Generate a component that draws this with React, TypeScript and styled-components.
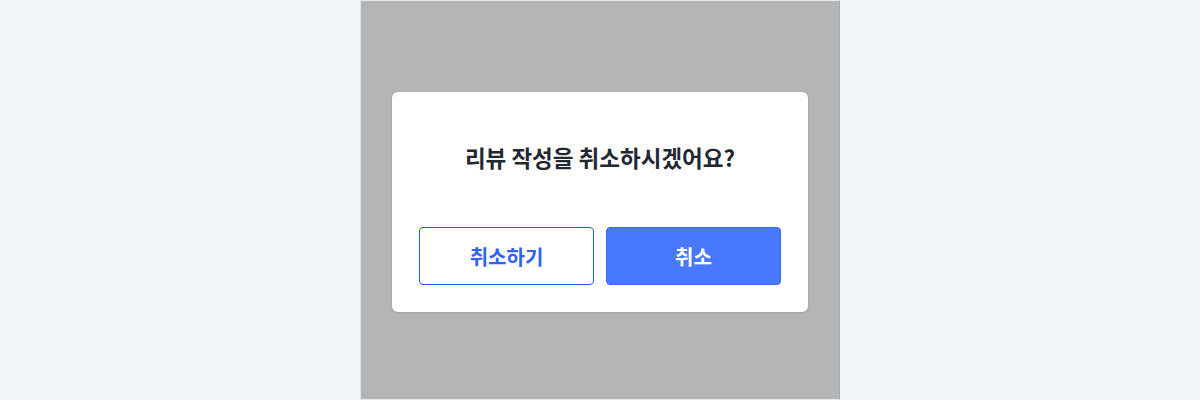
import React from "react";
import styled, { createGlobalStyle } from "styled-components";

const Global = createGlobalStyle`
  html, body { margin: 0; padding: 0; }
  body {
    background: #f2f5f7;
    font-family: "Noto Sans CJK KR", "Noto Sans", sans-serif;
  }
`;

const Page = styled.div`
  width: 1200px;
  height: 400px;
  display: flex;
  justify-content: center;
`;

const Column = styled.div`
  width: 480px;
  height: 400px;
  box-sizing: border-box;
  background: #b4b5b6;
  border-left: 1px solid #dfe2e4;
  border-right: 1px solid #a9abac;
  border-top: 1px solid #e6e9eb;
  border-bottom: 1px solid #e6e9eb;
  padding-top: 91px;
  display: flex;
  justify-content: center;
  align-items: flex-start;
`;

const Modal = styled.div`
  width: 416px;
  height: 220px;
  box-sizing: border-box;
  background: #ffffff;
  border-radius: 6px;
  box-shadow: 0 1px 3px rgba(0, 0, 0, 0.12);
  padding: 0 27px 27px;
  display: flex;
  flex-direction: column;
`;

const Title = styled.h2`
  margin: 0;
  flex: 1;
  display: flex;
  align-items: center;
  justify-content: center;
  padding-bottom: 6px;
  font-size: 22.5px;
  font-weight: 700;
  color: #222831;
  letter-spacing: 0;
`;

const Buttons = styled.div`
  display: grid;
  grid-template-columns: 1fr 1fr;
  gap: 12px;
`;

const Button = styled.button<{ $primary?: boolean }>`
  height: 58px;
  box-sizing: border-box;
  border-radius: 4px;
  border: 1px solid ${(p) => (p.$primary ? "#3b68f5" : "#2d5cf6")};
  background: ${(p) => (p.$primary ? "#4878fd" : "#ffffff")};
  color: ${(p) => (p.$primary ? "#ffffff" : "#2f62f5")};
  font-family: "Noto Sans CJK KR", "Noto Sans", sans-serif;
  font-size: 20px;
  font-weight: 700;
  padding: 0;
  cursor: pointer;
`;

export default function App() {
  return (
    <>
      <Global />
      <Page>
        <Column>
          <Modal>
            <Title>리뷰 작성을 취소하시겠어요?</Title>
            <Buttons>
              <Button>취소하기</Button>
              <Button $primary>취소</Button>
            </Buttons>
          </Modal>
        </Column>
      </Page>
    </>
  );
}
